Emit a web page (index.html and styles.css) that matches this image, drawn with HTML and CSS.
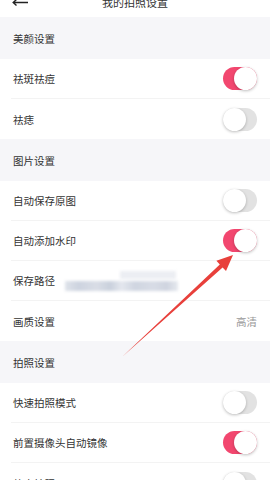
FILE: index.html
```html
<!DOCTYPE html>
<html lang="zh-CN">
<head>
    <meta charset="UTF-8">
    <meta name="viewport" content="width=device-width, initial-scale=1.0">
    <title>我的拍照设置</title>
    <link rel="stylesheet" href="styles.css">
</head>
<body>

    <div class="topbar">
        <svg class="back" width="17" height="8" viewBox="0 0 17 8">
            <path d="M16 3.5H1.5M4.5 0.5L1.2 3.5L4.5 6.5" fill="none" stroke="#222" stroke-width="1.4"/>
        </svg>
        <div class="title">我的拍照设置</div>
    </div>

    <div class="section">美颜设置</div>
    <div class="group">
        <div class="row">
            <span class="label">祛斑祛痘</span>
            <span class="switch on"><i></i></span>
        </div>
        <div class="row">
            <span class="label">祛痣</span>
            <span class="switch"><i></i></span>
        </div>
    </div>

    <div class="section">图片设置</div>
    <div class="group">
        <div class="row">
            <span class="label">自动保存原图</span>
            <span class="switch"><i></i></span>
        </div>
        <div class="row">
            <span class="label">自动添加水印</span>
            <span class="switch on"><i></i></span>
        </div>
        <div class="row">
            <span class="label">保存路径</span>
            <span class="path">
                <span class="blur top"></span>
                <span class="blur bottom"></span>
            </span>
        </div>
        <div class="row">
            <span class="label">画质设置</span>
            <span class="value">高清</span>
        </div>
    </div>

    <div class="section">拍照设置</div>
    <div class="group">
        <div class="row">
            <span class="label">快速拍照模式</span>
            <span class="switch"><i></i></span>
        </div>
        <div class="row">
            <span class="label">前置摄像头自动镜像</span>
            <span class="switch on"><i></i></span>
        </div>
        <div class="row">
            <span class="label">静音拍照</span>
            <span class="switch"><i></i></span>
        </div>
    </div>

    <!-- red annotation arrow drawn over the page -->
    <svg class="arrow" width="270" height="480" viewBox="0 0 270 480">
        <polygon points="122,357 222.6,267.4 226,271 233,255 216.4,260.8 219.8,264.4" fill="#e8403b"/>
    </svg>

</body>
</html>
```

FILE: styles.css
```css
* {
    margin: 0;
    padding: 0;
    box-sizing: border-box;
}

body {
    width: 270px;
    height: 480px;
    overflow: hidden;
    background-color: #fff;
    color: #333;
    font-family: "Noto Sans CJK SC", "Noto Sans", sans-serif;
    font-size: 10.5px;
    position: relative;
}

.topbar {
    height: 17px;
    display: flex;
    align-items: flex-start;
    justify-content: center;
    position: relative;
}

.back {
    position: absolute;
    left: 12px;
    top: -1px;
}

.title {
    font-size: 11px;
    line-height: 11px;
    margin-top: -3px;
    color: #333;
}

.section {
    height: 42px;
    display: flex;
    align-items: center;
    padding-left: 13px;
    background-color: #f6f6f9;
}

.row {
    height: 40px;
    display: flex;
    align-items: center;
    justify-content: space-between;
    margin-left: 11px;
    padding-left: 2px;
    padding-right: 13px;
    border-bottom: 1px solid #f3f3f3;
}

.group .row:last-child {
    border-bottom: none;
}

.switch {
    width: 34px;
    height: 23px;
    border-radius: 12px;
    background-color: #e2e2e2;
    position: relative;
}

.switch i {
    position: absolute;
    top: 0;
    left: 0;
    width: 23px;
    height: 23px;
    border-radius: 50%;
    background-color: #fff;
    box-shadow: 0 1px 3px rgba(0, 0, 0, 0.25);
}

.switch.on {
    background-color: #f2476f;
}

.switch.on i {
    left: auto;
    right: 0;
}

.value {
    color: #999;
}

.path {
    flex: 1;
    height: 22px;
    margin-left: 10px;
    margin-right: 79px;
    position: relative;
}

.blur {
    position: absolute;
    filter: blur(1.5px);
}

.blur.top {
    left: 55px;
    right: 2px;
    top: 1px;
    height: 8px;
    background-color: #eceef3;
}

.blur.bottom {
    left: 0;
    right: 0;
    top: 11px;
    height: 10px;
    background: linear-gradient(90deg, #dfe3ea 0%, #cdd3df 12%, #d9dde6 28%, #c9d0dc 40%, #e4e7ee 50%, #cfd5e0 62%, #d8dce6 78%, #cfd4df 90%, #e6e9ef 100%);
}

.arrow {
    position: absolute;
    left: 0;
    top: 0;
    pointer-events: none;
}
```
